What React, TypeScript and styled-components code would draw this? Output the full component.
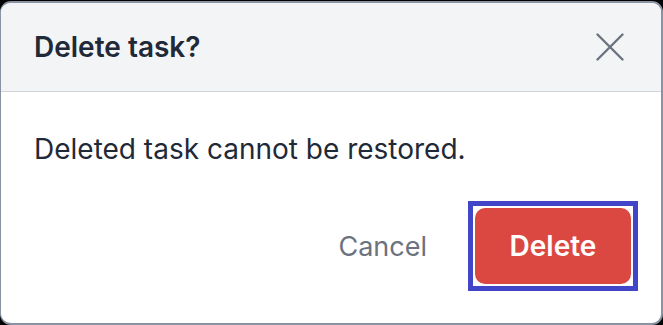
import styled, { createGlobalStyle } from "styled-components";

const GlobalStyle = createGlobalStyle`
  html, body {
    margin: 0;
    padding: 0;
    background: #000;
  }
  body {
    font-family: Inter, "Noto Sans", sans-serif;
  }
`;

export default function App() {
  return (
    <>
      <GlobalStyle />
      <Backdrop>
        <Dialog>
          <Header>
            <Title>Delete task?</Title>
            <CloseButton aria-label="Close">
              <svg width="28" height="28" viewBox="0 0 28 28" fill="none">
                <path
                  d="M1.5 1.5L26.5 26.5M26.5 1.5L1.5 26.5"
                  stroke="#6b7280"
                  strokeWidth="2.4"
                  strokeLinecap="round"
                />
              </svg>
            </CloseButton>
          </Header>
          <Body>
            <Message>Deleted task cannot be restored.</Message>
          </Body>
          <Footer>
            <CancelButton>Cancel</CancelButton>
            <FocusRing>
              <DeleteButton>Delete</DeleteButton>
            </FocusRing>
          </Footer>
        </Dialog>
      </Backdrop>
    </>
  );
}

const Backdrop = styled.div`
  width: 663px;
  height: 325px;
  padding: 1px 0 0 0;
  box-sizing: border-box;
`;

const Dialog = styled.div`
  display: flex;
  flex-direction: column;
  width: 663px;
  height: 324px;
  box-sizing: border-box;
  border: 2px solid #8a93a3;
  border-left-width: 1px;
  border-radius: 11px;
  background: #fff;
  overflow: hidden;
`;

const Header = styled.div`
  display: flex;
  align-items: center;
  justify-content: space-between;
  height: 88px;
  flex-shrink: 0;
  padding: 0 37px 0 33px;
  background: #f3f4f6;
  border-bottom: 1px solid #d1d5db;
`;

const Title = styled.h2`
  margin: 0;
  font-size: 28px;
  font-weight: 600;
  line-height: 34px;
  color: #1f2937;
`;

const CloseButton = styled.button`
  display: flex;
  align-items: center;
  justify-content: center;
  padding: 0;
  border: none;
  background: none;
  cursor: pointer;
`;

const Body = styled.div`
  padding: 40px 33px 0;
`;

const Message = styled.p`
  margin: 0;
  font-size: 28px;
  line-height: 34px;
  color: #1f2937;
`;

const Footer = styled.div`
  display: flex;
  justify-content: flex-end;
  align-items: center;
  gap: 41px;
  margin-top: 35px;
  padding: 0 23px;
`;

const CancelButton = styled.button`
  padding: 0;
  border: none;
  background: none;
  font-family: inherit;
  font-size: 27px;
  color: #6b7280;
  cursor: pointer;
`;

const FocusRing = styled.span`
  display: flex;
  padding: 2px;
  border: 5px solid #4146c9;
  background: #fff;
`;

const DeleteButton = styled.button`
  width: 156px;
  height: 76px;
  border: none;
  border-radius: 10px;
  background: #db4841;
  color: #fff;
  font-family: inherit;
  font-size: 28px;
  font-weight: 600;
  cursor: pointer;
`;
